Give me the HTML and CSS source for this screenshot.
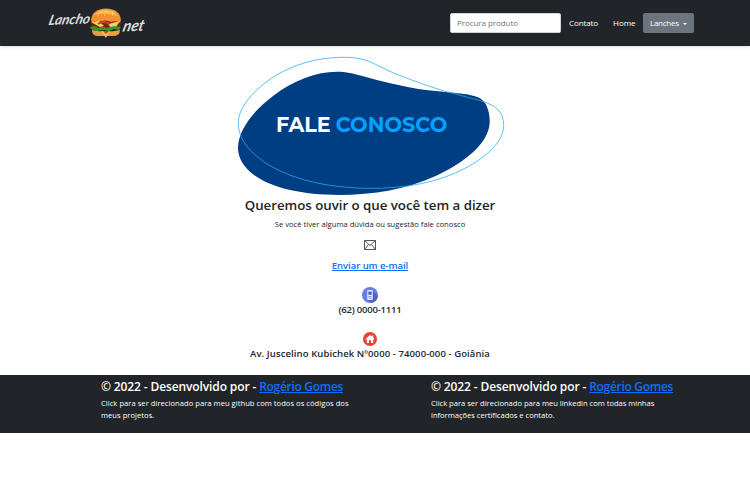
FILE: index.html
```html
<!DOCTYPE html>
<html lang="pt-br">
<head>
<meta charset="utf-8">
<title>Lancho.net</title>
<link rel="stylesheet" href="styles.css">
</head>
<body>
<header class="navbar">
  <svg class="logo" viewBox="0 0 120 46" role="img" aria-label="Lancho.net">
    <g class="script"><text x="0" y="0" textLength="41" lengthAdjust="spacingAndGlyphs" font-size="14" transform="translate(8 25) rotate(-2) skewX(-16)">Lancho</text><text x="0" y="0" textLength="21" lengthAdjust="spacingAndGlyphs" font-size="16" transform="translate(82 31.500) rotate(-2) skewX(-16)">net</text></g>
    <path d="M51 20Q52 9 66 8.500Q80 9 81 20L80 23H52Z" fill="#ef922f"/>
    <path d="M54 15Q59 9 67 10Q75 10 78 16Q66 12 54 15Z" fill="#f9ba59"/>
    <path d="M60 12h1m5-1h1m5 2h1m-9 2h1m-7 0h1m13 0h1" stroke="#ffe4a0"/>
    <path d="M51 23q3-3 7-1 8-3 13 0 6-2 10 1l-2 5H53Z" fill="#7c2116"/>
    <path d="M51 22l8-1 5 5-4 1Zm17 2 12-3-4 6-5 1Z" fill="#f4cf62"/>
    <path d="M58 24q5-4 12 0" fill="none" stroke="#d33b22" stroke-width="2"/>
    <path d="M50 27q4-2 8 1 5-2 9 0 5-3 14-1l-2 3-5-1-5 2-6-1-6 1-6-2Z" fill="#39991f"/>
    <path d="M52 30q14 3 28 0 0 6-7 6H58q-6 0-6-6Z" fill="#ee9b3d"/>
    <path d="M61 31h9l-4 7Z" fill="#f1c052"/><path d="m63 31 3 3 3-3Z" fill="#c63a24"/>
  </svg>
  <nav class="menu">
    <input class="search" type="text" placeholder="Procura produto">
    <a class="contact" href="#">Contato</a>
    <a class="home" href="#">Home</a>
    <button class="dropdown"><span>Lanches</span><i class="caret"></i></button>
  </nav>
</header>
<main class="content">
  <svg class="banner" viewBox="0 0 870 435" role="img" aria-label="Fale conosco">
    <path d="M39 295C39 240 85 182 145 137C205 91 275 65 335 65C365 65 384 70 409 77C490 99 557 116 640 124C690 130 748 131 771 149C787 162 795 190 794 218C791 281 718 337 632 378C547 417 445 435 341 435C235 435 142 415 88 376C55 352 40 325 39 295Z" fill="#003e83"/>
    <path d="M40 220C39 177 78 128 136 87C205 40 289 20 367 22C431 24 445 43 506 69C575 97 643 121 717 139C782 156 835 164 836 226C836 275 785 321 718 356C643 395 546 417 425 415C300 413 191 385 121 338C72 305 41 268 40 220Z" fill="none" stroke="#28acef" stroke-width="2.300"/>
    <text class="fale" x="153" y="245" textLength="164" lengthAdjust="spacingAndGlyphs">FALE</text>
    <text class="conosco" x="332" y="245" textLength="335" lengthAdjust="spacingAndGlyphs">CONOSCO</text>
  </svg>
  <h1><span>Queremos ouvir o que você tem a dizer</span></h1>
  <p class="lead">Se você tiver alguma dúvida ou sugestão fale conosco</p>
  <svg class="mail" viewBox="0 0 14 12"><path d="M1.500 1.500h11v9h-11Zm0 0 5.500 5 5.500-5m-11 9 4-5m3 0 4 5" fill="none" stroke="#444" stroke-width=".9"/></svg>
  <a class="email" href="#">Enviar um e-mail</a>
  <svg class="phone" viewBox="0 0 16 16"><circle cx="8" cy="8" r="8" fill="#667eea"/><path d="m11 4 5 5q-1 6-7 7l-4-4Z" fill="#5165ba"/><rect x="5.200" y="3" width="5.600" height="10" rx="1" fill="#e5eaff"/><path d="M6.400 4.600h3.200v3.200H6.400Z" fill="#4659ac"/><path d="M6.500 9.500h3m-3 1.700h3" stroke="#7182d1" stroke-width=".8"/></svg>
  <p class="number">(62) 0000-1111</p>
  <svg class="house" viewBox="0 0 14 14"><circle cx="7" cy="7" r="7" fill="#e9422f"/><path d="m2.500 7 4.500-4 1.800 1.600V3.500h1.400v2.300L11.500 7l-.7.700-.6-.5V11H8.100V8.300H6V11H3.800V7.200l-.6.500Z" fill="#fff"/></svg>
  <p class="address">Av. Juscelino Kubichek Nº0000 - 74000-000 - Goiânia</p>
</main>
<footer class="footer">
  <section><h2>© 2022 - Desenvolvido por - <a href="#">Rogério Gomes</a></h2><p class="git">Click para ser direcionado para meu github com todos os códigos dos<br>meus projetos.</p></section>
  <section><h2>© 2022 - Desenvolvido por - <a href="#">Rogério Gomes</a></h2><p class="linked">Click para ser direcionado para meu linkedin com todas minhas<br>informações certificados e contato.</p></section>
</footer>
</body>
</html>
```
FILE: styles.css
```css
* { box-sizing: border-box; }
body { margin: 0; background: #fff; color: #212529; font-family: "Open Sans", "Noto Sans", sans-serif; }
h1, h2, p { margin: 0; white-space: nowrap; }
a { color: #0d6efd; }
.navbar { height: 46px; background: #212529; display: flex; justify-content: space-between; padding: 0 56px 0 40px; box-shadow: 0 1px 3px #0002; }
.logo { width: 120px; height: 46px; }
.script { font-family: "Brush Script MT", Lato, sans-serif; font-style: italic; font-weight: bold; fill: #dedede; }
.menu { display: flex; align-items: center; font-size: 8px; }
.menu a { color: #fff; text-decoration: none; padding-bottom: 2px; }
.search { width: 111px; height: 20px; border: 1px solid #ced4da; border-radius: 2px; padding: 0 6px 1px; font: 8px "Open Sans", sans-serif; letter-spacing: -.06px; }
.search::placeholder { color: #6c757d; opacity: 1; }
.contact { width: 44px; margin-left: 8px; letter-spacing: -.1px; }
.home { width: 30px; }
.dropdown { width: 51px; height: 20px; padding: 0 7px 1px; border: 0; border-radius: 2px; background: #6c757d; color: #fff; font: 8px "Open Sans", sans-serif; display: flex; align-items: center; justify-content: space-between; letter-spacing: -.25px; }
.caret { border: 2.5px solid transparent; border-top-color: #fff; border-bottom: 0; margin-top: 2px; }
.content { width: 740px; height: 329px; padding-top: 4px; display: flex; flex-direction: column; align-items: center; }
.banner { width: 290px; height: 145px; flex: none; margin-left: 0; }
.fale, .conosco { font-family: Montserrat, "Open Sans", sans-serif; font-size: 63px; font-weight: 700; fill: #fff; }
.conosco { fill: #00a2ff; }
h1 { font-size: 13.3px; line-height: 20px; font-weight: 600; letter-spacing: -.03px; }
.lead { font-size: 7.6px; line-height: 12px; margin-top: 3px; letter-spacing: .02px; }
.mail { width: 14px; height: 12px; margin-top: 9px; flex: none; }
.email { font-size: 9.5px; line-height: 14px; font-weight: 600; margin-top: 8px; letter-spacing: -.05px; }
.phone { width: 16px; height: 16px; margin-top: 14px; flex: none; }
.number, .address { font-size: 9.5px; line-height: 14px; font-weight: 600; }
.number { letter-spacing: -.2px; }
.house { width: 14px; height: 14px; margin-top: 15px; flex: none; }
.address { margin-top: 1px; letter-spacing: .1px; }
.footer { height: 58px; background: #212529; color: #fff; display: grid; grid-template-columns: 330px 300px; padding: 2px 0 0 101px; }
h2 { font-size: 12px; line-height: 20px; font-weight: 600; letter-spacing: -.12px; }
h2 a { letter-spacing: -.3px; }
.footer p { font-size: 7.6px; line-height: 12px; }
.git { letter-spacing: .03px; }
.linked { letter-spacing: -.02px; }
```
